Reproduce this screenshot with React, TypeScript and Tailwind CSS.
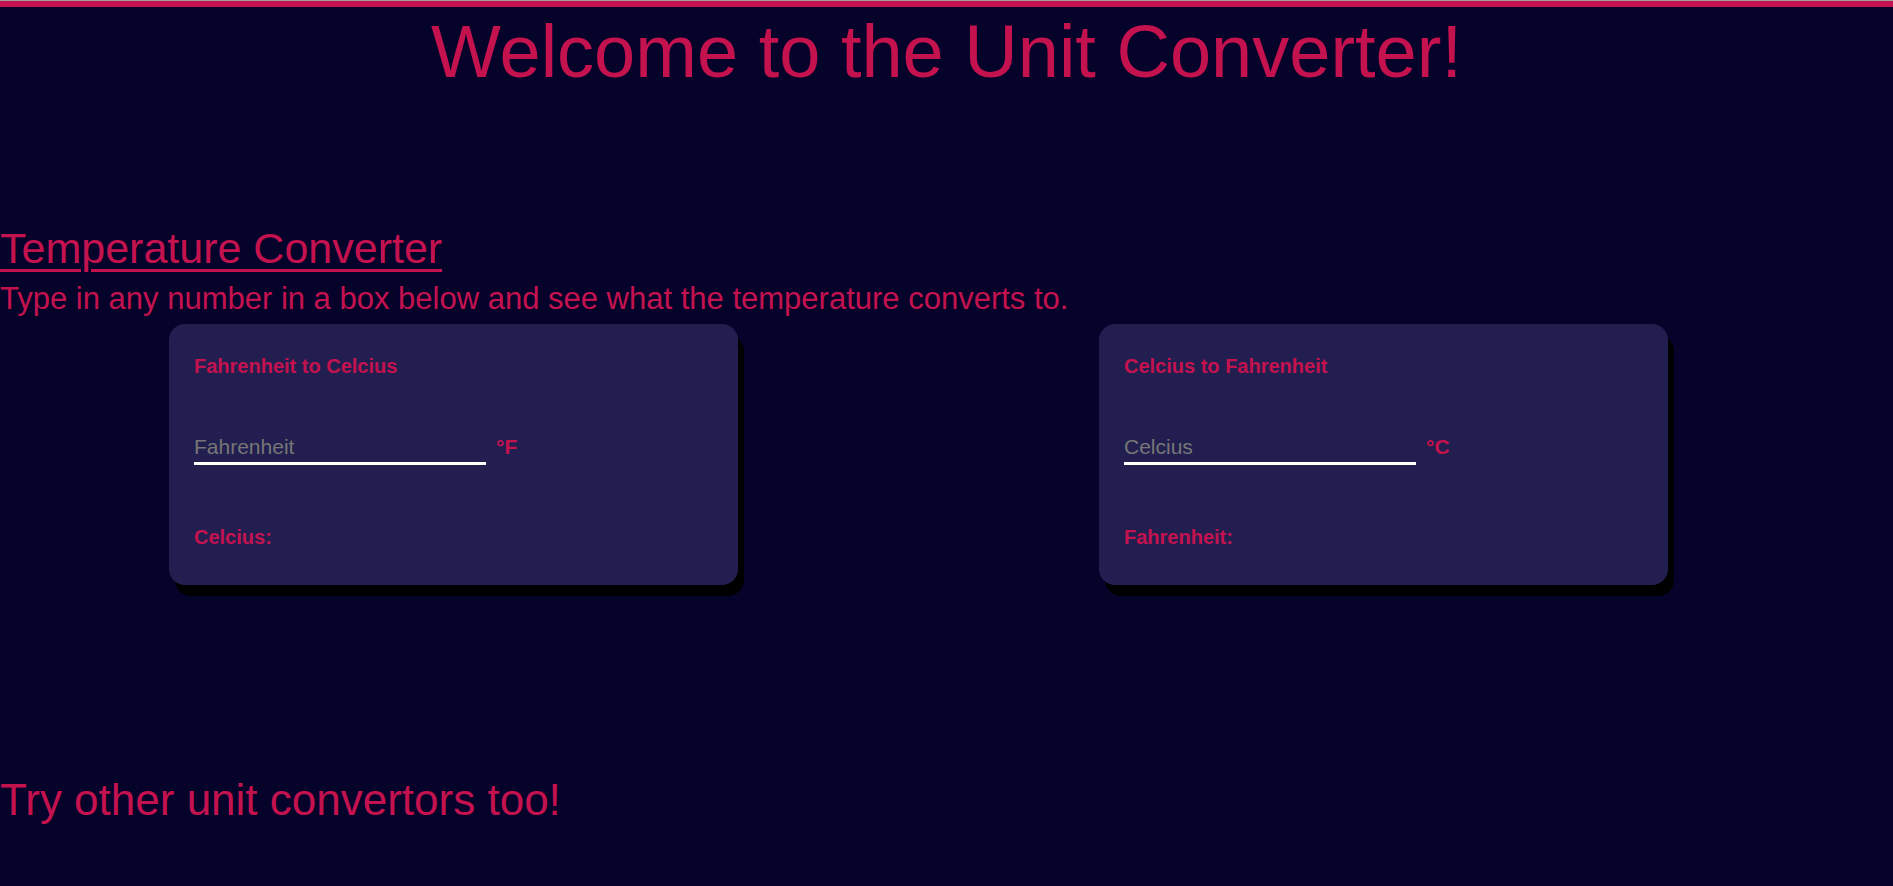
type ConverterCardProps = {
  title: string;
  placeholder: string;
  unit: string;
  resultLabel: string;
};

function ConverterCard({ title, placeholder, unit, resultLabel }: ConverterCardProps) {
  return (
    <div className="h-[261px] w-[569px] shrink-0 rounded-[16px] bg-[#221f50] px-[25px] pt-[32px] shadow-[6px_11px_0_#000]">
      <h3 className="text-[20px] font-bold leading-none">{title}</h3>
      <div className="mt-[59px] flex items-baseline">
        <input
          type="number"
          placeholder={placeholder}
          className="box-border h-[30px] w-[292px] border-b-[3px] border-white bg-transparent pb-[3px] text-[21px] leading-none text-white outline-none placeholder:text-[#767676]"
        />
        <span className="ml-[10px] text-[21px] font-bold leading-none">{unit}</span>
      </div>
      <p className="mt-[62px] text-[20px] font-bold leading-none">{resultLabel}</p>
    </div>
  );
}

export default function App() {
  return (
    <div className="min-h-screen bg-[#06032b] font-['Liberation_Sans',Arial,sans-serif] text-[#c4124f]">
      <div className="h-px bg-[#9e9e9e]" />
      <div className="h-[6px] bg-[#c4124f]" />
      <h1 className="mt-[8px] text-center text-[74px] leading-none">Welcome to the Unit Converter!</h1>

      <h2 className="mt-[138px] text-[43px] leading-none underline decoration-[3px] underline-offset-[6px]">
        Temperature Converter
      </h2>
      <p className="mt-[13px] text-[31px] leading-none">
        Type in any number in a box below and see what the temperature converts to.
      </p>

      <div className="mt-[10px] flex gap-[361px] pl-[169px]">
        <ConverterCard
          title="Fahrenheit to Celcius"
          placeholder="Fahrenheit"
          unit="°F"
          resultLabel="Celcius:"
        />
        <ConverterCard
          title="Celcius to Fahrenheit"
          placeholder="Celcius"
          unit="°C"
          resultLabel="Fahrenheit:"
        />
      </div>

      <h2 className="mt-[193px] text-[44px] leading-none">Try other unit convertors too!</h2>
    </div>
  );
}
